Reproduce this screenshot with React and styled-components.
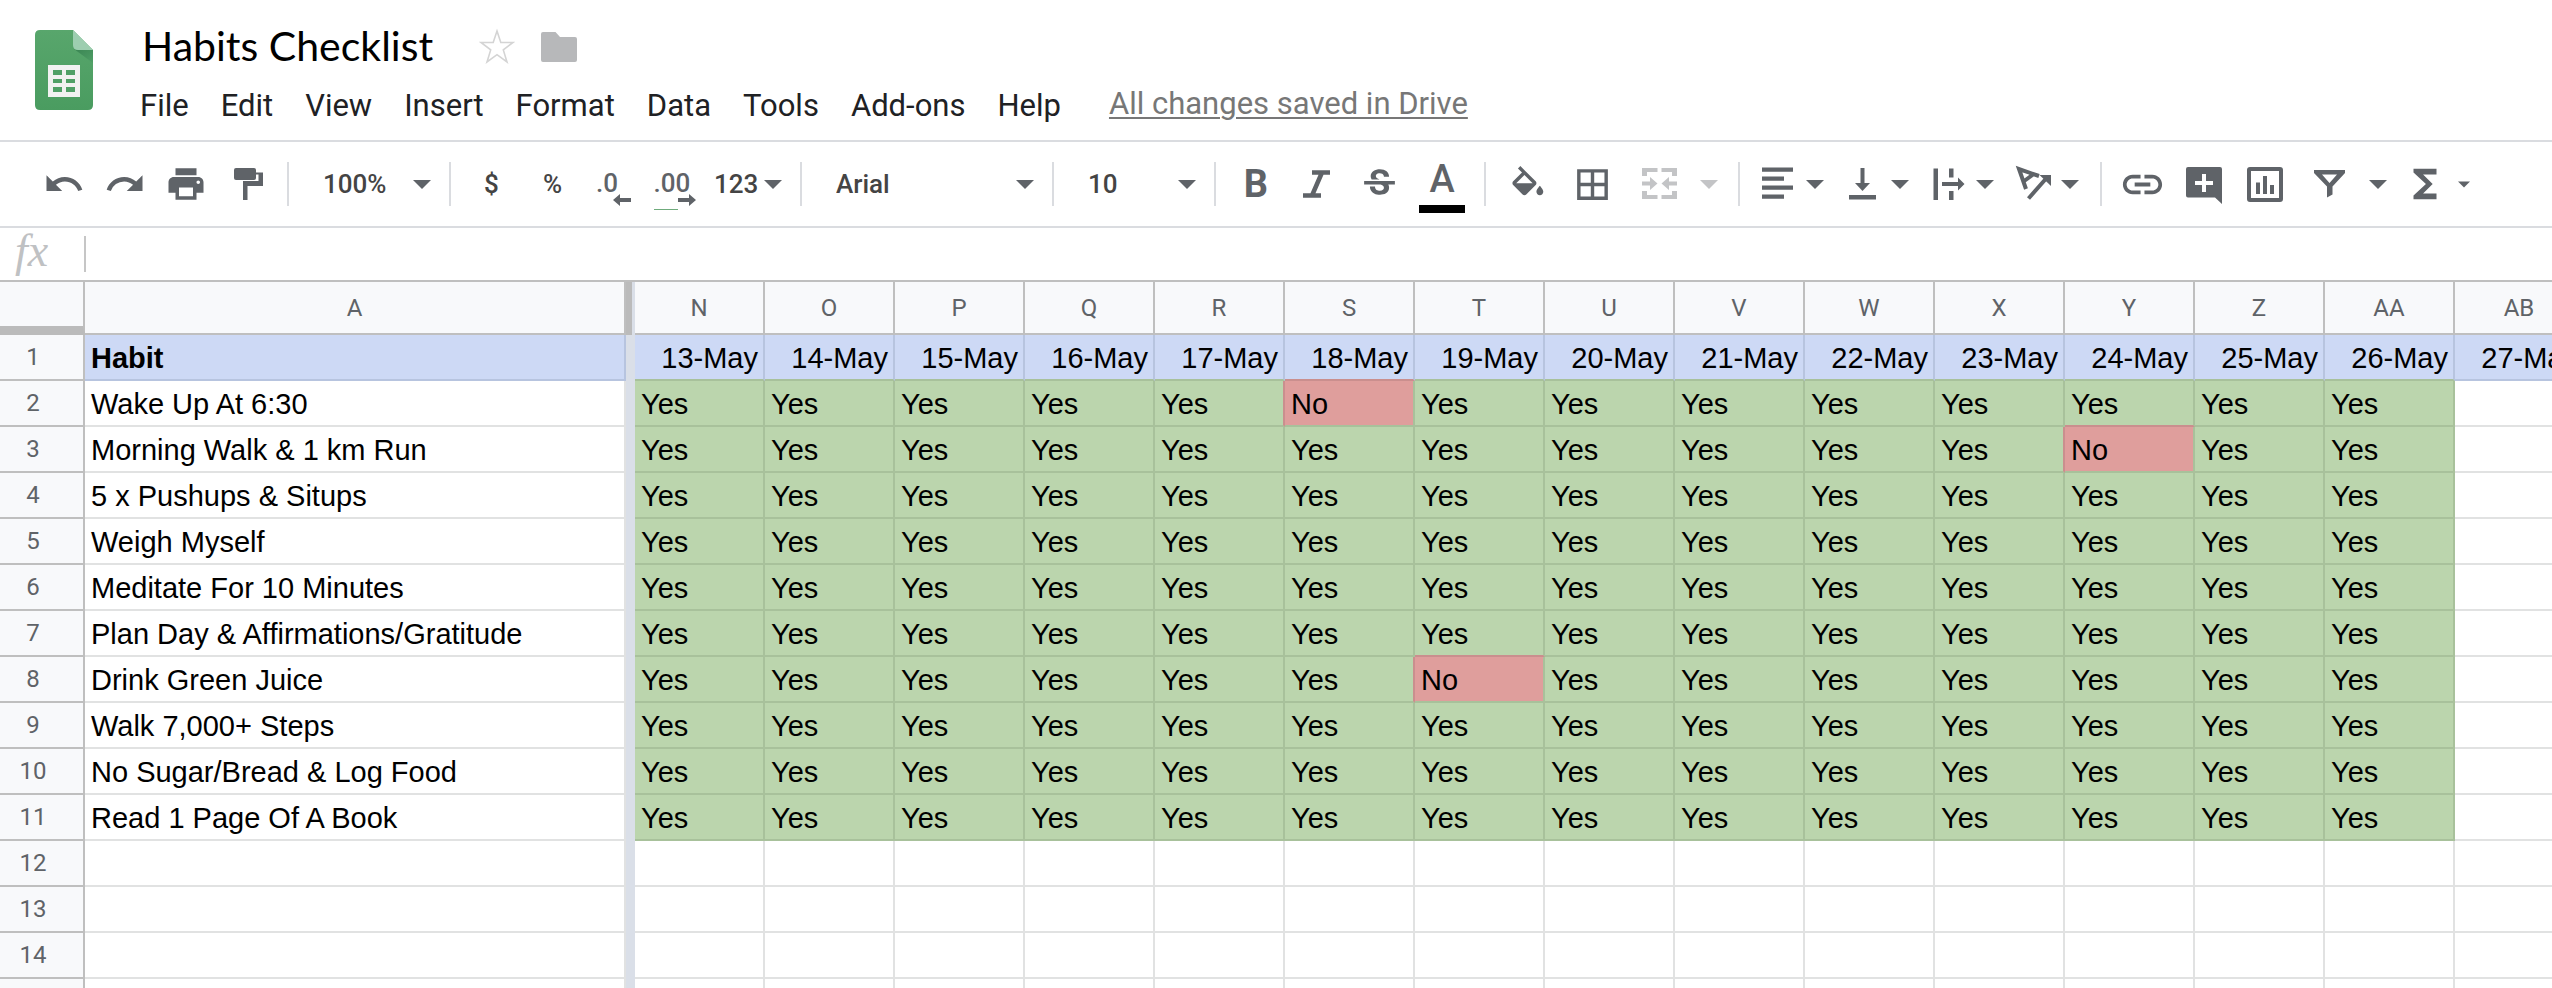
import styled, { createGlobalStyle } from 'styled-components'
import {
  MdBorderAll,
  MdFunctions,
  MdLink,
  MdPrint,
  MdRedo,
  MdStrikethroughS,
  MdUndo,
} from 'react-icons/md'

const colors = {
  icon: '#5f6368',
  iconDisabled: '#c3c4c6',
  text: '#444444',
  line: '#dadce0',
  gridLine: '#e1e2e2',
  headerLine: '#bfbfbf',
  headerBg: '#f8f9fb',
  frozen: '#dadfe8',
}

// background and grid line colour of each kind of cell
const fills = {
  blue: { bg: '#cdd9f5', line: '#b7c4df' },
  green: { bg: '#bbd5ad', line: '#a8c19b' },
  red: { bg: '#df9e9c', line: '#ca8f8e' },
  none: { bg: '#ffffff', line: colors.gridLine },
}

const GlobalStyle = createGlobalStyle`
  * {
    box-sizing: border-box;
  }

  body {
    margin: 0;
    background-color: white;
    font-family: Roboto, 'Liberation Sans', sans-serif;
  }

  button, select, input {
    margin: 0;
    padding: 0;
    border: none;
    background: none;
    font: inherit;
    color: inherit;
  }
`

const Page = styled.div`
  display: flex;
  flex-direction: column;
  height: 100vh;
  overflow: hidden;
`

const Header = styled.header`
  display: flex;
  align-items: flex-start;
  height: 140px;
  padding: 12px 34px;
`

const LogoLink = styled.a`
  display: flex;
  margin-top: 18px;
  margin-right: 46px;
`

const TitleRow = styled.div`
  display: flex;
  align-items: center;
  height: 68px;
`

const Title = styled.h1`
  margin: 0 46px 0 0;
  padding-left: 2px;
  font-family: Lato, sans-serif;
  font-size: 41px;
  font-weight: 400;
  line-height: 48px;
  color: black;
`

const TitleButton = styled.button`
  display: flex;
  margin-right: 26px;
`

const MenuBar = styled.nav`
  display: flex;
  align-items: center;
  gap: 32px;
  height: 52px;
  font-size: 31px;
  line-height: 36px;
  color: #202124;
`

const SaveLink = styled.a`
  margin-left: 16px;
  margin-bottom: 4px;
  color: #777777;
  text-decoration: underline;
  text-decoration-thickness: 2px;
  text-underline-offset: 3px;
`

const Toolbar = styled.div`
  display: flex;
  align-items: center;
  height: 88px;
  padding-left: 33px;
  border-top: 2px solid ${colors.line};
  border-bottom: 2px solid ${colors.line};
  font-size: 26px;
  font-weight: 500;
  color: ${colors.text};
`

const Separator = styled.span`
  flex: none;
  width: 2px;
  height: 44px;
  margin: 0 10px;
  background-color: ${colors.line};
`

const ToolButton = styled.button`
  display: flex;
  flex: none;
  align-items: center;
  justify-content: center;
  width: ${(props) => props.$width || 61}px;
  height: 60px;
`

const IconButton = styled(ToolButton)`
  color: ${colors.icon};
`

const MenuButton = styled.button`
  display: flex;
  flex: none;
  align-items: center;
  gap: ${(props) => props.$gap || 10}px;
  width: ${(props) => (props.$wide ? 102 : 85)}px;
  height: 60px;
  padding-left: ${(props) => (props.$wide ? 16 : 10)}px;
  color: ${(props) => (props.disabled ? colors.iconDisabled : colors.icon)};
`

const IconSlot = styled.span`
  display: flex;
  flex: none;
  align-items: center;
  justify-content: center;
  width: 36px;

  svg {
    flex: none;
  }
`

const Drop = styled.span`
  display: grid;
  flex: none;
  align-items: center;
  width: ${(props) => props.$width}px;
  height: 60px;

  > * {
    grid-area: 1 / 1;
  }

  select {
    width: 100%;
    height: 100%;
    padding-left: ${(props) => (props.$tight ? 9 : 24)}px;
    appearance: none;
  }

  svg {
    justify-self: end;
    margin-right: 8px;
    color: ${colors.icon};
    pointer-events: none;
  }
`

const Letter = styled.span`
  font-size: 38px;
  font-weight: ${(props) => (props.$bold ? 700 : 500)};
  line-height: 44px;
`

const ColorLetter = styled.span`
  display: flex;
  flex-direction: column;
  align-items: center;
  width: 46px;
  margin-top: 4px;
  border-bottom: 8px solid black;

  ${Letter} {
    line-height: 40px;
    margin-bottom: 6px;
  }
`

const Decimal = styled.span`
  position: relative;
  display: flex;
  flex-direction: column;
  align-items: flex-start;
  width: ${(props) => (props.$long ? 42 : 35)}px;
  padding-top: 6px;
  line-height: 30px;

  svg {
    align-self: flex-end;
    margin-top: -4px;
  }
`

const GreenMark = styled.span`
  position: absolute;
  left: 0;
  bottom: -4px;
  width: 24px;
  height: 1px;
  background-color: #6fab7c;
`

const FormulaBar = styled.div`
  display: flex;
  align-items: center;
  height: 52px;
`

const FxLabel = styled.label`
  width: 84px;
  padding-bottom: 6px;
  padding-left: 15px;
  font-family: 'Liberation Serif', serif;
  font-size: 46px;
  font-style: italic;
  line-height: 46px;
  color: #bfc1c3;
`

const FormulaInput = styled.input`
  flex: 1;
  height: 36px;
  padding: 0 12px;
  border-left: 2px solid #c6c6c6;
  font-size: 26px;
  outline: none;
`

const SheetArea = styled.main`
  flex: 1;
  min-height: 0;
  overflow: hidden;
  border-top: 2px solid ${colors.headerLine};
`

const Sheet = styled.table`
  width: max-content;
  table-layout: fixed;
  border-collapse: separate;
  border-spacing: 0;
`

const Col = styled.col`
  width: ${(props) => props.$width}px;
`

const HeadCell = styled.th`
  height: 53px;
  padding: 0;
  border-right: 2px solid ${colors.headerLine};
  border-bottom: 2px solid ${colors.headerLine};
  background-color: ${colors.headerBg};
  font-size: 24px;
  font-weight: 400;
  color: ${colors.icon};
`

const CornerCell = styled(HeadCell)`
  border-bottom: 9px solid #bbbbbb;
`

const RowNumber = styled(HeadCell)`
  height: 46px;
  padding-right: 17px;
`

const FrozenEdge = styled.td`
  padding: 0;
  background-color: ${colors.frozen};
  border-left: ${(props) => (props.$head ? '6px solid #bbbbbb' : 'none')};
`

const Cell = styled.td`
  height: 46px;
  padding: 2px 5px 0 6px;
  overflow: hidden;
  border-right: 2px solid ${(props) => props.$right};
  border-bottom: 2px solid ${(props) => props.$bottom};
  background-color: ${(props) => fills[props.$fill].bg};
  font-family: 'Liberation Sans', sans-serif;
  font-size: 29px;
  font-weight: ${(props) => (props.$bold ? 700 : 400)};
  line-height: 30px;
  text-align: ${(props) => (props.$alignRight ? 'right' : 'left')};
  white-space: nowrap;
  color: black;
`

function Glyph({ children, viewBox = '0 0 36 36', width = 36, height = 36 }) {
  return (
    <svg width={width} height={height} viewBox={viewBox} fill="currentColor" overflow="visible" aria-hidden="true">
      {children}
    </svg>
  )
}

function Caret({ small }) {
  return (
    <Glyph width={small ? 12 : 18} height={small ? 7 : 9} viewBox="0 0 18 9">
      <path d="M0 0h18L9 9z" />
    </Glyph>
  )
}

function SheetsLogo() {
  return (
    <svg width="60" height="80" viewBox="0 0 60 80" aria-hidden="true">
      <defs>
        <linearGradient id="page" x1="0" y1="0" x2="0" y2="1">
          <stop offset="0" stopColor="#58a66c" />
          <stop offset="1" stopColor="#4a9c60" />
        </linearGradient>
        <linearGradient id="shade" x1="0" y1="0" x2="1" y2="1">
          <stop offset="0" stopColor="#3a8453" />
          <stop offset="1" stopColor="#4f9f66" />
        </linearGradient>
      </defs>
      <path d="M6 0h33l20 20v55q0 5-5 5H6q-5 0-5-5V5q0-5 5-5z" fill="url(#page)" />
      <path d="M40 19l19 14V20z" fill="url(#shade)" />
      <path d="M39 0l20 20H44q-5 0-5-5z" fill="#9dceb0" />
      <path d="M14 35h32v32H14z" fill="#f1f1f1" />
      <path d="M19 40h9v5h-9zM32 40h9v5h-9zM19 49h9v4h-9zM32 49h9v4h-9zM19 57h9v5h-9zM32 57h9v5h-9z" fill="#4f9f66" />
    </svg>
  )
}

const menus = ['File', 'Edit', 'View', 'Insert', 'Format', 'Data', 'Tools', 'Add-ons', 'Help']

function DocumentHeader() {
  return (
    <Header>
      <LogoLink href="#home" aria-label="Sheets home">
        <SheetsLogo />
      </LogoLink>
      <div>
        <TitleRow>
          <Title>Habits Checklist</Title>
          <TitleButton aria-label="Star">
            <svg width="36" height="36" viewBox="0 0 36 36" fill="none" stroke="#d4d4d4" strokeWidth="1.6" aria-hidden="true">
              <path d="M18 3l3.8 11.5H34l-9.7 7.4L28 34l-10-7.3L8 34l3.700-12.100L2 14.500h12.200z" />
            </svg>
          </TitleButton>
          <TitleButton aria-label="Move to folder">
            <svg width="36" height="36" viewBox="0 0 36 36" fill="#b7b8ba" aria-hidden="true">
              <path d="M2 4h12.500l4.500 5H34q2 0 2 2v21q0 2-2 2H2q-2 0-2-2V6q0-2 2-2z" />
            </svg>
          </TitleButton>
        </TitleRow>
        <MenuBar>
          {menus.map((name) => (
            <button key={name}>{name}</button>
          ))}
          <SaveLink href="#history">All changes saved in Drive</SaveLink>
        </MenuBar>
      </div>
    </Header>
  )
}

function FormatToolbar() {
  return (
    <Toolbar role="toolbar" aria-label="Formatting">
      <IconButton aria-label="Undo"><MdUndo size={42} /></IconButton>
      <IconButton aria-label="Redo"><MdRedo size={42} /></IconButton>
      <IconButton aria-label="Print"><MdPrint size={42} /></IconButton>
      <IconButton aria-label="Paint format">
        <Glyph>
          <path d="M7 2h18q2 0 2 2v8q0 2-2 2H7q-2 0-2-2V4q0-2 2-2z" />
          <path d="M27 6.500h7V20H18.500v14H14V15h15.500V8.500H27z" />
        </Glyph>
      </IconButton>
      <Separator />
      <Drop $width={140}>
        <select aria-label="Zoom">
          <option>100%</option>
        </select>
        <Caret />
      </Drop>
      <Separator />
      <ToolButton aria-label="Format as currency">$</ToolButton>
      <ToolButton aria-label="Format as percent">%</ToolButton>
      <IconButton aria-label="Decrease decimal places">
        <Decimal>
          .0
          <Glyph width={18} height={12} viewBox="0 0 18 12">
            <path d="M0 6l7-6v4h11v4H7v4z" />
          </Glyph>
        </Decimal>
      </IconButton>
      <IconButton aria-label="Increase decimal places">
        <Decimal $long>
          .00
          <Glyph width={18} height={12} viewBox="0 0 18 12">
            <path d="M18 6l-7-6v4H0v4h11v4z" />
          </Glyph>
          <GreenMark />
        </Decimal>
      </IconButton>
      <Drop $width={85} $tight>
        <select aria-label="More formats">
          <option>123</option>
        </select>
        <Caret />
      </Drop>
      <Separator />
      <Drop $width={230}>
        <select aria-label="Font">
          <option>Arial</option>
        </select>
        <Caret />
      </Drop>
      <Separator />
      <Drop $width={140}>
        <select aria-label="Font size">
          <option>10</option>
        </select>
        <Caret />
      </Drop>
      <Separator />
      <IconButton $width={60} aria-label="Bold"><Letter $bold>B</Letter></IconButton>
      <IconButton $width={62} aria-label="Italic">
        <Glyph>
          <path d="M13 6.500h18M4 29.500h18M23 6.500L13 29.500" fill="none" stroke="currentColor" strokeWidth="4.500" />
        </Glyph>
      </IconButton>
      <IconButton $width={62} aria-label="Strikethrough"><MdStrikethroughS size={41} /></IconButton>
      <IconButton $width={64} aria-label="Text color">
        <ColorLetter><Letter>A</Letter></ColorLetter>
      </IconButton>
      <Separator />
      <IconButton $width={62} aria-label="Fill color">
        <Glyph viewBox="1 0 21 21">
          <path d="M16.560 8.940L7.620 0 6.210 1.410l2.380 2.380-5.150 5.150c-.59.59-.59 1.540 0 2.120l5.500 5.500c.29.29.68.44 1.060.44s.77-.15 1.060-.44l5.500-5.500c.59-.58.59-1.530 0-2.120zM5.210 10L10 5.210 14.790 10H5.210zM19 11.500s-2 2.170-2 3.500c0 1.100.9 2 2 2s2-.9 2-2c0-1.330-2-3.500-2-3.500z" />
        </Glyph>
      </IconButton>
      <IconButton $width={68} aria-label="Borders"><MdBorderAll size={41} /></IconButton>
      <MenuButton $wide $gap={22} disabled aria-label="Merge cells">
        <Glyph>
          <path d="M0 2h15.500v4H5v4H0zM19.500 2H35v8h-5V6H19.500zM0 25h5v4h10.500v4H0zM30 25h5v8H19.500v-4H30z" />
          <path d="M0 15.500h8v-4.500l7.500 6.500L8 24v-4.500H0zM35 15.500h-8v-4.500l-7.500 6.500L27 24v-4.500h8z" />
        </Glyph>
        <Caret />
      </MenuButton>
      <Separator />
      <MenuButton aria-label="Horizontal align">
        <Glyph>
          <path d="M2 1.500h31v4.200H2zM2 10.500h22v4.200H2zM2 19.500h31v4.200H2zM2 28.500h22v4.200H2z" />
        </Glyph>
        <Caret />
      </MenuButton>
      <MenuButton aria-label="Vertical align">
        <Glyph>
          <path d="M15.500 2h4v15h5.500l-7.500 8-7.500-8h5.500zM4 29h27v4.500H4z" />
        </Glyph>
        <Caret />
      </MenuButton>
      <MenuButton aria-label="Text wrapping">
        <Glyph>
          <path d="M3.500 2.500H8v31.500H3.500zM19 2.500h4.500v9H19zM19 25h4.500v9H19zM12 16h16v-4.500l6.500 6.500-6.500 6.500V20H12z" />
        </Glyph>
        <Caret />
      </MenuButton>
      <MenuButton aria-label="Text rotation">
        <Glyph>
          <path d="M11 23L4 3l20 7M8.500 15.500L18 8.500M13.500 32.500L32 11.500" fill="none" stroke="currentColor" strokeWidth="4" />
          <path d="M24.500 9H36v11z" />
        </Glyph>
        <Caret />
      </MenuButton>
      <Separator />
      <IconButton aria-label="Insert link"><MdLink size={47} /></IconButton>
      <IconButton aria-label="Insert comment">
        <Glyph>
          <path d="M2 1h32q2 0 2 2v35l-7-6.500H2q-2 0-2-2V3q0-2 2-2z" />
          <path d="M16 8h4v7h7v4h-7v7h-4v-7H9v-4h7z" fill="white" />
        </Glyph>
      </IconButton>
      <IconButton aria-label="Insert chart">
        <Glyph>
          <rect x="2" y="3" width="32" height="31" rx="1" fill="none" stroke="currentColor" strokeWidth="4" />
          <path d="M9 16.500h4V28H9zM16 10h4v18h-4zM23 19h4v9h-4z" />
        </Glyph>
      </IconButton>
      <MenuButton $wide $gap={22} aria-label="Filter">
        <Glyph>
          <path fillRule="evenodd" d="M3 4h31v3L21.500 20.500v8L16 31.500v-11L3 7zM11 8.500l7.500 8.500L26 8.500z" />
        </Glyph>
        <Caret />
      </MenuButton>
      <MenuButton $gap={15} aria-label="Functions">
        <IconSlot><MdFunctions size={46} /></IconSlot>
        <Caret small />
      </MenuButton>
    </Toolbar>
  )
}

const columns = ['N', 'O', 'P', 'Q', 'R', 'S', 'T', 'U', 'V', 'W', 'X', 'Y', 'Z', 'AA', 'AB']
const doneDays = 14

const habits = [
  'Wake Up At 6:30',
  'Morning Walk & 1 km Run',
  '5 x Pushups & Situps',
  'Weigh Myself',
  'Meditate For 10 Minutes',
  'Plan Day & Affirmations/Gratitude',
  'Drink Green Juice',
  'Walk 7,000+ Steps',
  'No Sugar/Bread & Log Food',
  'Read 1 Page Of A Book',
]

// missed days by row number
const missed = { 2: 'S', 3: 'Y', 8: 'T' }
const lastRow = 15

function getText(row, index) {
  if (row === 1) return `${13 + index}-May`
  if (row > habits.length + 1 || index >= doneDays) return ''
  return missed[row] === columns[index] ? 'No' : 'Yes'
}

function getFill(row, index) {
  if (row === 1) return 'blue'
  const text = getText(row, index)
  if (text === 'No') return 'red'
  return text === 'Yes' ? 'green' : 'none'
}

// a shared line takes the colour of the next cell, unless that one is empty
function getLine(fill, next) {
  return fills[next === 'none' ? fill : next].line
}

function HabitSheet() {
  const rows = Array.from({ length: lastRow }, (_, i) => i + 1)

  return (
    <SheetArea>
      <Sheet>
        <colgroup>
          <Col $width={85} />
          <Col $width={541} />
          <Col $width={9} />
          {columns.map((name) => (
            <Col key={name} $width={130} />
          ))}
        </colgroup>
        <thead>
          <tr>
            <CornerCell aria-label="Select all" />
            <HeadCell scope="col">A</HeadCell>
            <FrozenEdge $head />
            {columns.map((name) => (
              <HeadCell key={name} scope="col">{name}</HeadCell>
            ))}
          </tr>
        </thead>
        <tbody>
          {rows.map((row) => (
            <tr key={row}>
              <RowNumber scope="row">{row}</RowNumber>
              <Cell
                $fill={row === 1 ? 'blue' : 'none'}
                $right={row === 1 ? fills.blue.line : colors.gridLine}
                $bottom={row === 1 ? fills.blue.line : colors.gridLine}
                $bold={row === 1}
              >
                {row === 1 ? 'Habit' : habits[row - 2]}
              </Cell>
              <FrozenEdge />
              {columns.map((name, index) => {
                const fill = getFill(row, index)
                return (
                  <Cell
                    key={name}
                    $fill={fill}
                    $right={getLine(fill, getFill(row, index + 1))}
                    $bottom={getLine(fill, getFill(row + 1, index))}
                    $alignRight={row === 1}
                  >
                    {getText(row, index)}
                  </Cell>
                )
              })}
            </tr>
          ))}
        </tbody>
      </Sheet>
    </SheetArea>
  )
}

function App() {
  return (
    <Page>
      <GlobalStyle />
      <DocumentHeader />
      <FormatToolbar />
      <FormulaBar>
        <FxLabel htmlFor="formula">fx</FxLabel>
        <FormulaInput id="formula" type="text" />
      </FormulaBar>
      <HabitSheet />
    </Page>
  )
}

export default App
